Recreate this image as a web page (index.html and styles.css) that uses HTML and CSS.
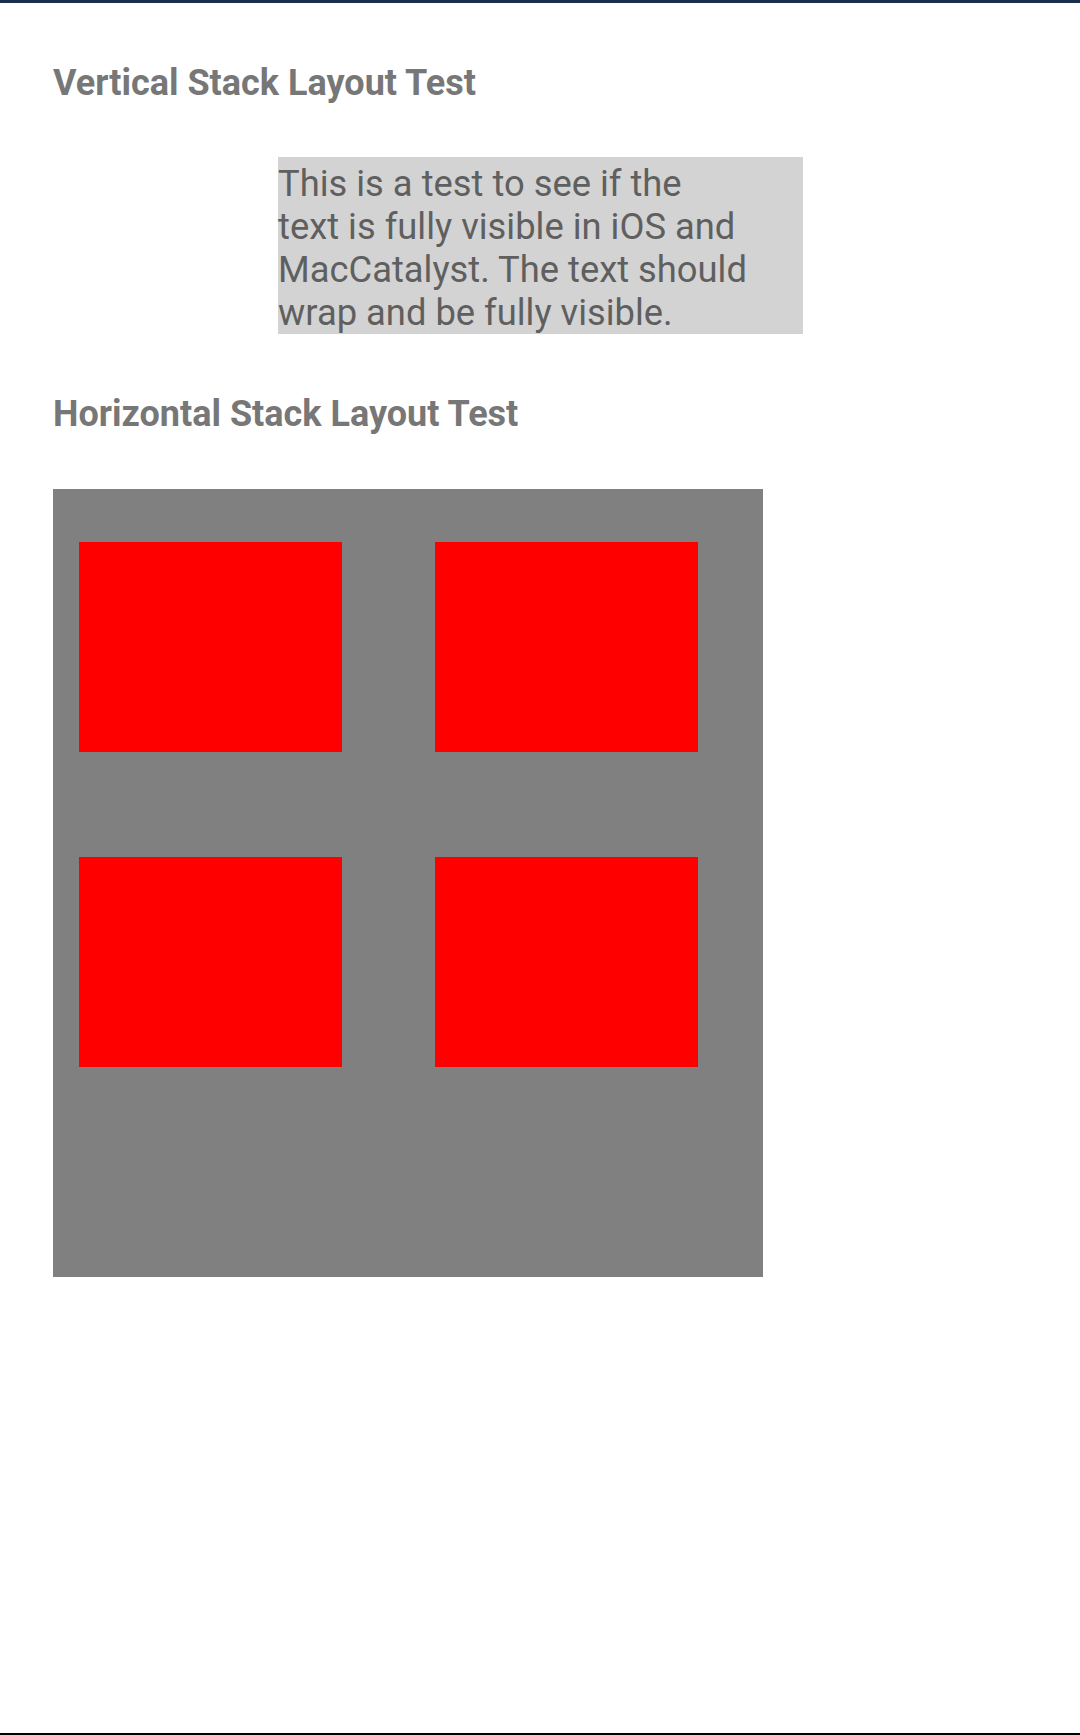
FILE: index.html
```html
<!DOCTYPE html>
<html lang="en">
<head>
<meta charset="utf-8">
<title>Stack Layout Test</title>
<link rel="stylesheet" href="styles.css">
</head>
<body>
<main class="page">
  <h1 class="section-title">Vertical Stack Layout Test</h1>
  <div class="vstack">
    <p class="wrap-label">This is a test to see if the<br>text is fully visible in iOS and<br>MacCatalyst. The text should<br>wrap and be fully visible.</p>
  </div>
  <h2 class="section-title section-title--second">Horizontal Stack Layout Test</h2>
  <div class="hstack">
    <div class="tile"></div>
    <div class="tile"></div>
    <div class="tile"></div>
    <div class="tile"></div>
  </div>
</main>
</body>
</html>
```

FILE: styles.css
```css
html, body {
  margin: 0;
  padding: 0;
  height: 100%;
}

body {
  box-sizing: border-box;
  border-top: 3px solid #1c2f4d;
  border-bottom: 2px solid #000000;
  background: #ffffff;
  font-family: Roboto, "Liberation Sans", sans-serif;
  overflow: hidden;
}

.page {
  display: flex;
  flex-direction: column;
  align-items: flex-start;
  padding: 0 0 0 53px;
}

.section-title {
  margin: 59px 0 0 0;
  font-size: 36px;
  font-weight: 700;
  line-height: 42px;
  color: #777777;
}

.section-title--second {
  margin-top: 59px;
}

.vstack {
  margin: 53px 0 0 225px;
  width: 525px;
  box-sizing: border-box;
  background: #d3d3d3;
  padding: 5px 0 0 0;
}

.wrap-label {
  margin: 0;
  font-size: 36.35px;
  line-height: 43px;
  color: #5f5f5f;
}

.hstack {
  margin-top: 54px;
  width: 710px;
  height: 788px;
  box-sizing: border-box;
  background: #808080;
  padding: 53px 65px 0 26px;
  display: flex;
  flex-wrap: wrap;
  align-content: flex-start;
  column-gap: 93px;
  row-gap: 105px;
}

.tile {
  width: 263px;
  height: 210px;
  background: #ff0000;
}
```
